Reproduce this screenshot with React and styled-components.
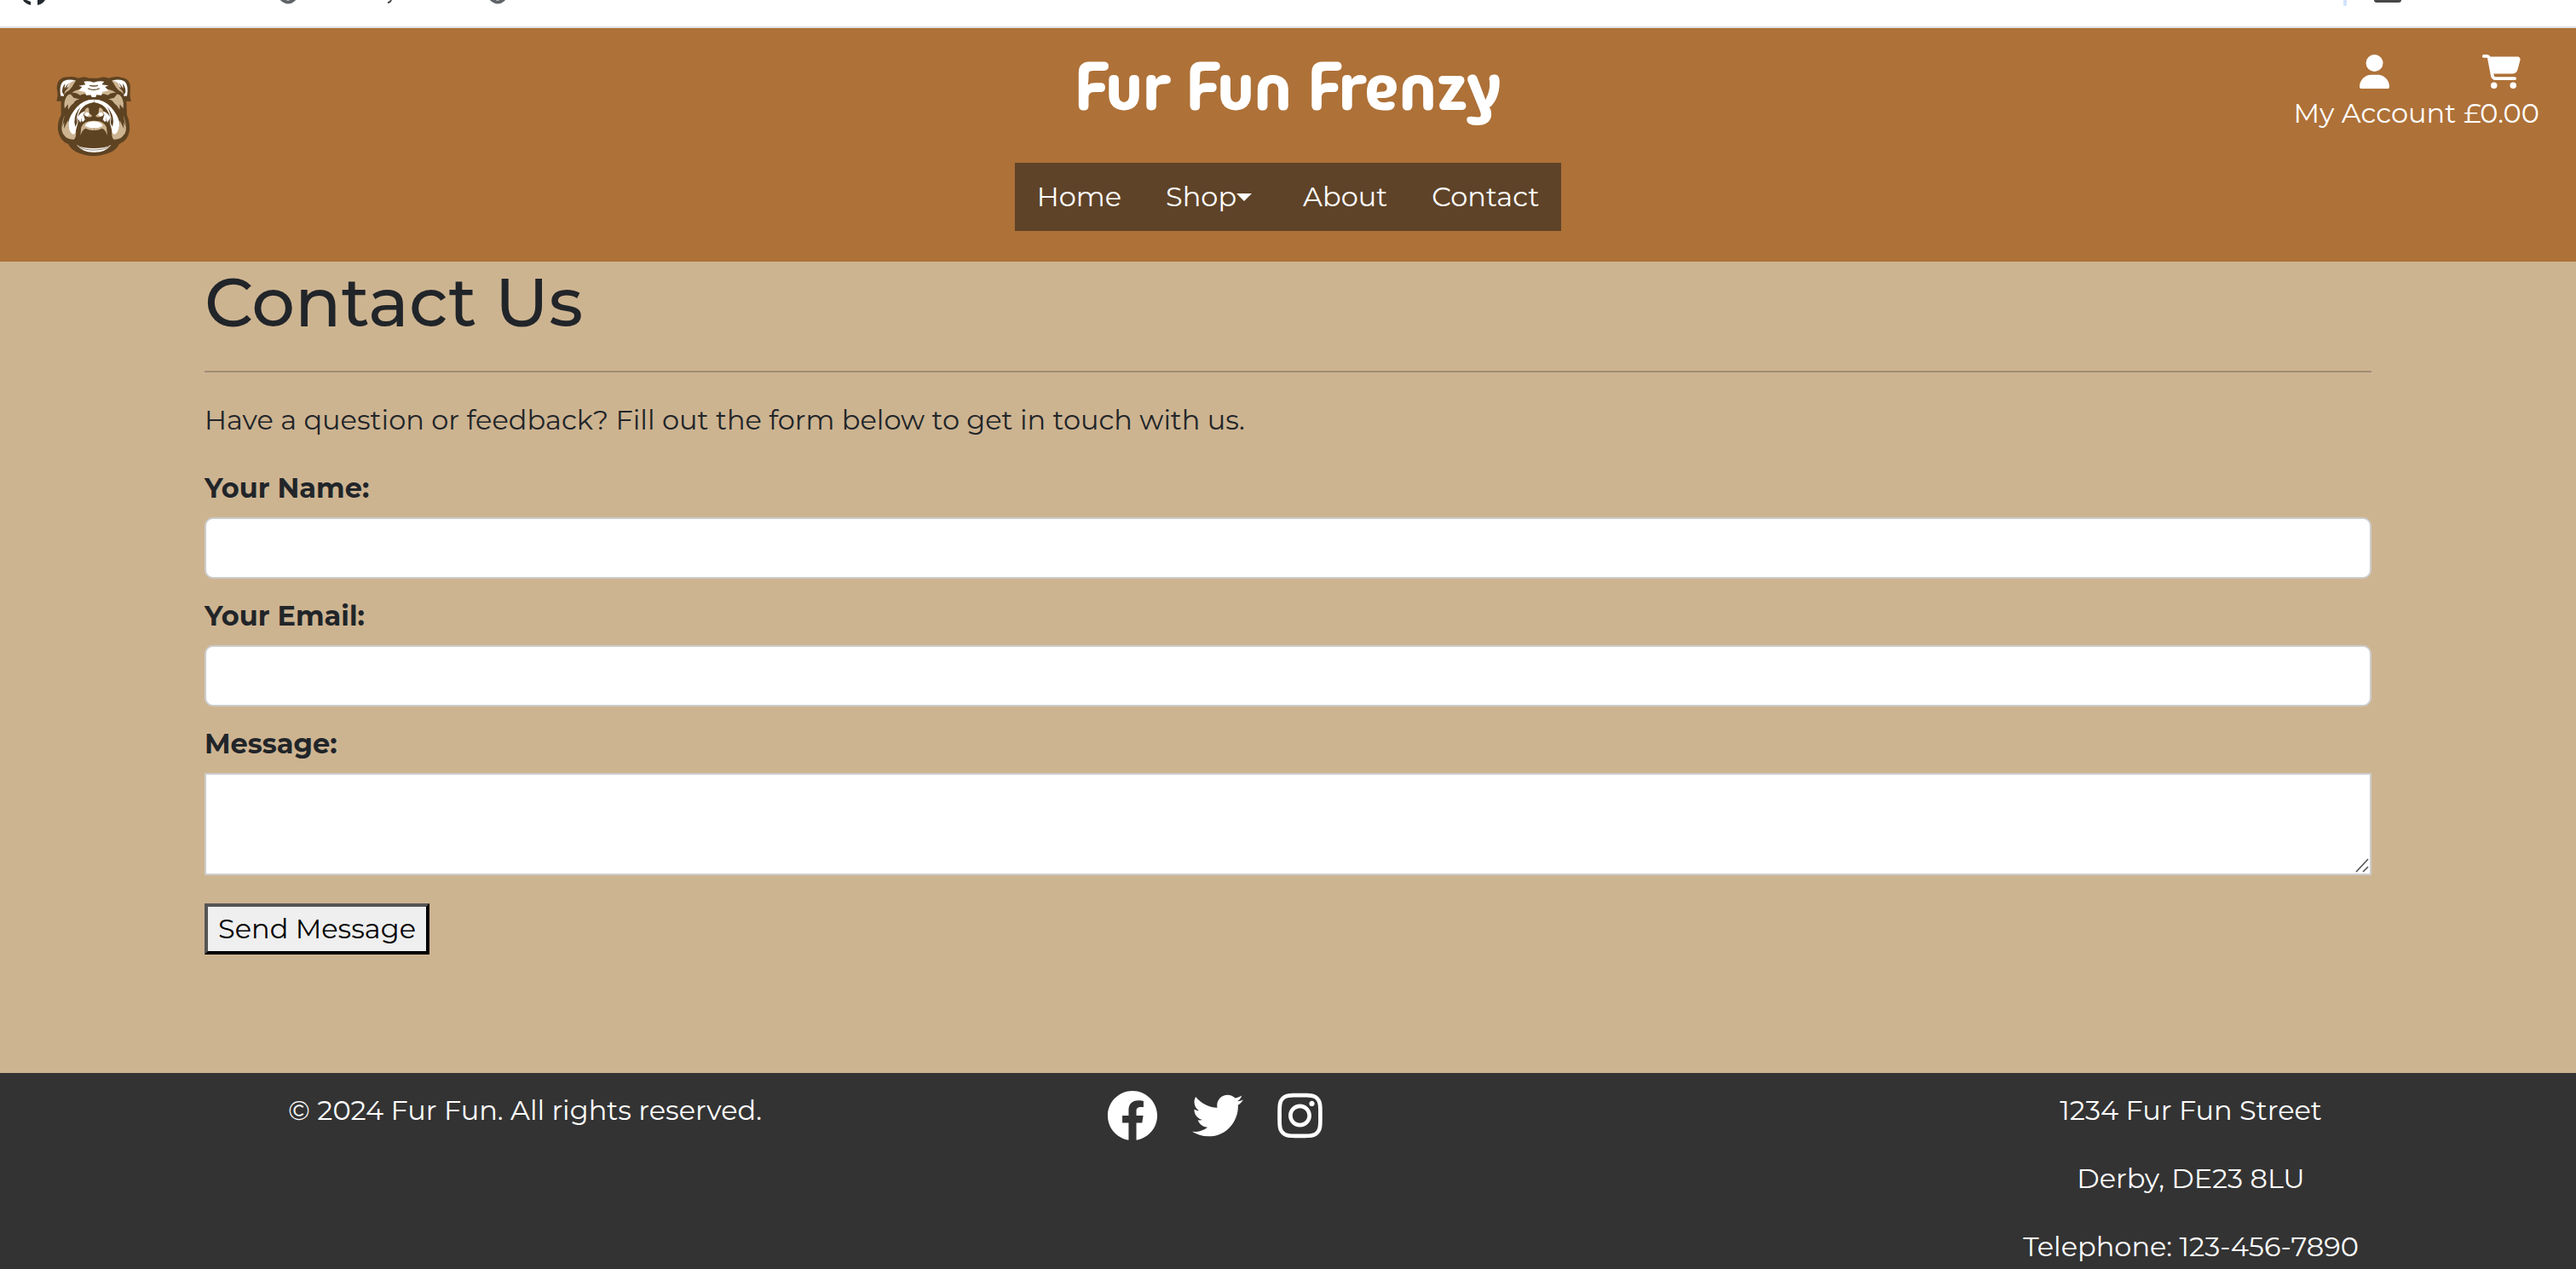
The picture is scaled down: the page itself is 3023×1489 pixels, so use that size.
import React from "react";
import styled, { createGlobalStyle } from "styled-components";
import { FaUser, FaCartShopping, FaTwitter, FaInstagram } from "react-icons/fa6";
import { FaFacebook } from "react-icons/fa";

const GlobalStyle = createGlobalStyle`
  *, *::before, *::after { box-sizing: border-box; }
  body {
    margin: 0;
    background: #cdb491;
    color: #212529;
    font-family: "Montserrat", Inter, "Open Sans", sans-serif;
    font-size: 32px;
    line-height: 48px;
    overflow: hidden;
  }
  a { color: inherit; text-decoration: none; }
`;

const Page = styled.div`
  min-height: 100vh;
  display: flex;
  flex-direction: column;
`;

const BookmarkBar = styled.div`
  height: 33px;
  display: flex;
  align-items: flex-start;
  background: #fff;
  border-bottom: 2px solid #e1e1e1;
`;

const BookmarkStrip = styled.svg`
  display: block;
  width: 100%;
  height: 8px;
`;

const Header = styled.header`
  height: 274px;
  display: grid;
  grid-template-columns: 1fr auto 1fr;
  align-items: start;
  background: #ae7138;
  color: #fff;
`;

const LogoLink = styled.a`
  justify-self: start;
  display: block;
  margin: 47px 0 0 50px;
`;

const Brand = styled.div`
  display: flex;
  flex-direction: column;
  align-items: center;
`;

const Title = styled.h1`
  margin: 0;
  padding-top: 20px;
  height: 158px;
  font-family: "Madimi One", "Fredoka", "Lato", sans-serif;
  font-weight: 500;
  font-size: 80px;
  line-height: 96px;
`;

const Nav = styled.nav`
  display: flex;
  height: 80px;
  padding: 0 26px;
  gap: 52px;
  align-items: center;
  background: #5e4328;
`;

const NavLink = styled.a`
  display: flex;
  align-items: center;
`;

const Caret = styled.span`
  margin-right: 8px;
  border: 9px solid transparent;
  border-top-color: #fff;
  border-bottom: 0;
`;

const Account = styled.div`
  justify-self: end;
  display: flex;
  gap: 9px;
  padding: 31px 43px 0 0;
`;

const AccountLink = styled.a`
  display: flex;
  flex-direction: column;
  align-items: center;
  gap: 5px;
  svg { display: block; height: 40px; width: ${(p) => p.$iconWidth}px; }
`;

const Main = styled.main`
  padding: 0 240px;
  min-height: 952px;
`;

const Heading = styled.h2`
  margin: 0;
  font-size: 80px;
  font-weight: 500;
  line-height: 96px;
`;

const Rule = styled.hr`
  margin: 32px 0;
  border: 0;
  border-top: 2px solid #a18d74;
`;

const Intro = styled.p`
  margin: 0 0 32px;
`;

const Field = styled.div`
  margin-bottom: 20px;
`;

const Label = styled.label`
  display: block;
  margin-bottom: 10px;
  font-weight: 700;
`;

const Input = styled.input`
  display: block;
  width: 100%;
  height: 72px;
  padding: 0 16px;
  border: 2px solid #ccc;
  border-radius: 10px;
  background: #fff;
  font: inherit;
`;

const TextArea = styled.textarea`
  display: block;
  width: 100%;
  height: 120px;
  padding: 8px 16px;
  border: 2px solid #ccc;
  background: #fff;
  font: inherit;
  resize: none;
`;

const AreaWrap = styled.div`
  position: relative;
`;

const Grip = styled.svg`
  position: absolute;
  right: 3px;
  bottom: 3px;
`;

const SendButton = styled.button`
  display: block;
  height: 60px;
  margin-top: 33px;
  padding: 0 12px;
  border: 4px solid;
  border-color: #555 #000 #000 #555;
  background: #efefef;
  color: #000;
  font: inherit;
`;

const Footer = styled.footer`
  flex: 1;
  display: grid;
  grid-template-columns: 1232fr 386fr 501fr 904fr;
  padding-top: 20px;
  background: #333;
  color: #fff;
  text-align: center;
`;

const FooterText = styled.p`
  margin: 0 0 32px;
`;

const Social = styled.div`
  display: flex;
  justify-content: center;
  align-items: flex-start;
  gap: 40px;
`;

const SocialLink = styled.a`
  svg { display: block; height: 60px; width: ${(p) => p.$iconWidth}px; }
`;

const Address = styled.address`
  grid-column: 4;
  font-style: normal;
`;

function DogLogo() {
  const half = (
    <>
      <path fill="#fff" d="M64 98 C60 76 61 54 75 45 Q94 37 117 44 Q101 50 91 64 Q78 74 74 99 Q68 96 64 98Z" />
      <path fill="#cdb491" d="M117 44 Q104 43 94 55 L88 73 Q79 77 75 92 Q84 82 94 77 Q105 66 112 52Z" />
      <path fill="#5e4322" d="M69 85 Q68 67 79 54 L77 72 Q85 58 94 51 Q85 62 84 74 Q77 80 75 94Z" />
      <path fill="#cdb491" d="M82 104 Q88 91 104 91 L108 103 L130 109 Q114 113 110 122 Q98 130 90 146 L89 127 L78 142 Q73 123 82 104Z" />
      <path fill="#cdb491" d="M103 87 Q124 68 180 73 L180 94 L166 95 Q145 86 132 95 Q118 84 103 87Z" />
      <path fill="#5e4322" d="M97 91 Q114 88 129 101 L130 108 L111 105Z" />
      <path fill="#cdb491" d="M78 164 Q58 215 75 235 Q86 252 110 251 Q121 247 116 207 L92 211 L89 184 L75 213 L76 190 L68 207Z" />
      <path fill="#fff" d="M180 110 Q142 110 119 139 Q97 164 91 190 Q89 217 104 232 Q116 235 117 220 Q121 202 124 194 L125 178 L133 192 Q138 166 154 151 Q137 151 124 171 Q130 145 151 130 Q164 122 180 120Z" />
      <path fill="#5e4322" d="M112 190 Q112 159 134 136 Q121 158 118 186 L123 171 L121 195 L115 206Z" />
      <path fill="#cdb491" d="M150 145 Q162 133 163 145 L164 158 L175 168 Q166 177 153 169 L145 163Z" />
      <path fill="#fff" d="M151 157 L161 155 L166 164 L156 170 L147 166Z" />
      <path fill="#fff" d="M137 187 Q136 170 144 164 L149 181 L143 188Z" />
      <path fill="#cdb491" d="M180 185 Q145 184 136 208 L133 237 Q140 216 151 212 Q165 219 180 219Z" />
    </>
  );
  return (
    <svg width="120" height="110" viewBox="0 0 360 330" aria-label="Fur Fun Frenzy logo" role="img">
      <path fill="#5e4322" d="M49 116 Q56 96 50 72 Q50 30 91 31 Q111 28 125 35 L145 31 Q158 33 164 35 L196 35 Q214 28 232 35 Q260 26 278 33 Q309 36 309 72 Q305 99 312 117 L295 116 L297 165 Q308 189 306 220 Q301 255 270 267 Q260 286 242 295 Q211 309 180 309 Q148 309 118 295 Q99 284 90 267 Q61 257 54 218 Q52 186 65 165 L65 116Z" />
      {half}
      <g transform="translate(361 0) scale(-1 1)">{half}</g>
      <path fill="#fff" d="M145 47 Q160 43 180 50 Q202 43 217 47 L208 58 L232 61 L220 66 L232 79 L210 84 L207 96 L190 92 L187 102 L173 102 L169 93 L154 96 L150 84 L127 79 L139 66 L127 62 L151 58Z" />
      <path fill="none" stroke="#5e4322" strokeWidth="4" strokeLinecap="round" d="M161 72 Q180 80 199 72 M167 61 Q180 65 193 61" />
      <path fill="#fff" d="M149 203 Q156 188 180 187 Q205 188 212 203 Q196 212 180 211 Q164 211 149 203Z" />
      <path fill="#fff" d="M119 269 Q138 282 180 282 Q222 282 242 269 Q222 297 180 296 Q140 296 119 269Z" />
      <path fill="none" stroke="#5e4322" strokeWidth="2" d="M128 276 Q145 288 180 288 Q215 288 234 276" />
      <path fill="#5e4322" d="M135 269 Q180 284 225 269 L217 277 Q180 283 143 277Z" />
    </svg>
  );
}

export default function App() {
  return (
    <>
      <GlobalStyle />
      <Page>
        <BookmarkBar>
          <BookmarkStrip aria-hidden="true">
            <path d="M27 0 Q29 4 36 6 V2 L31 0Z M44 0 V6 Q50 5 53 0Z" fill="#24292f" />
            <path d="M328 -4 Q338 9 348 -4 M574 -4 Q584 9 594 -4" fill="none" stroke="#5f6368" strokeWidth="4" />
            <path d="M459 0 Q458 3 455 3" fill="none" stroke="#444" strokeWidth="2" />
            <rect x="2750" y="-4" width="4" height="11" rx="1" fill="#d3e3fd" />
            <rect x="2786" y="-6" width="32" height="9" rx="3" fill="#474747" />
          </BookmarkStrip>
        </BookmarkBar>
        <Header>
          <LogoLink href="#home"><DogLogo /></LogoLink>
          <Brand>
            <Title>Fur Fun Frenzy</Title>
            <Nav>
              <NavLink href="#home">Home</NavLink>
              <NavLink href="#shop">Shop<Caret /></NavLink>
              <NavLink href="#about">About</NavLink>
              <NavLink href="#contact">Contact</NavLink>
            </Nav>
          </Brand>
          <Account>
            <AccountLink href="#account" $iconWidth={35}><FaUser />My Account</AccountLink>
            <AccountLink href="#cart" $iconWidth={45}><FaCartShopping />£0.00</AccountLink>
          </Account>
        </Header>
        <Main>
          <Heading>Contact Us</Heading>
          <Rule />
          <Intro>Have a question or feedback? Fill out the form below to get in touch with us.</Intro>
          <form onSubmit={(e) => e.preventDefault()}>
            <Field>
              <Label htmlFor="name">Your Name:</Label>
              <Input id="name" type="text" />
            </Field>
            <Field>
              <Label htmlFor="email">Your Email:</Label>
              <Input id="email" type="email" />
            </Field>
            <Label htmlFor="message">Message:</Label>
            <AreaWrap>
              <TextArea id="message" />
              <Grip width="16" height="17" viewBox="0 0 16 17" aria-hidden="true">
                <path d="M1 16 L15 1 M9 16 L15 10" stroke="#555" strokeWidth="1.6" fill="none" />
              </Grip>
            </AreaWrap>
            <SendButton type="submit">Send Message</SendButton>
          </form>
        </Main>
        <Footer>
          <FooterText>© 2024 Fur Fun. All rights reserved.</FooterText>
          <Social>
            <SocialLink href="#facebook" aria-label="Facebook" $iconWidth={60}><FaFacebook /></SocialLink>
            <SocialLink href="#twitter" aria-label="Twitter" $iconWidth={60}><FaTwitter /></SocialLink>
            <SocialLink href="#instagram" aria-label="Instagram" $iconWidth={53}><FaInstagram /></SocialLink>
          </Social>
          <Address>
            <FooterText>1234 Fur Fun Street</FooterText>
            <FooterText>Derby, DE23 8LU</FooterText>
            <FooterText>Telephone: 123-456-7890</FooterText>
          </Address>
        </Footer>
      </Page>
    </>
  );
}
